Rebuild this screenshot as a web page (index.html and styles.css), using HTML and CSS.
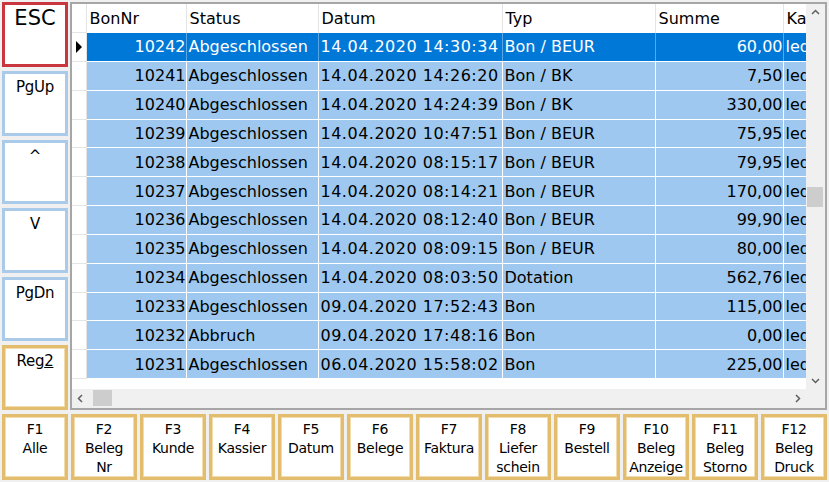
FILE: index.html
```html
<!DOCTYPE html>
<html lang="de">
<head>
    <meta charset="UTF-8">
    <title>Belege</title>
    <link rel="stylesheet" href="styles.css">
</head>
<body>
    <div class="screen">
        <div class="top">
            <!-- Navigation keys -->
            <div class="side">
                <div class="key key-red key-esc">ESC</div>
                <div class="key key-blue">PgUp</div>
                <div class="key key-blue">^</div>
                <div class="key key-blue">V</div>
                <div class="key key-blue">PgDn</div>
                <div class="key key-gold">Reg<u>2</u></div>
            </div>

            <!-- Receipt list -->
            <div class="grid">
                <div class="viewport">
                    <table class="list">
                        <colgroup>
                            <col class="c-ind">
                            <col class="c-nr">
                            <col class="c-status">
                            <col class="c-datum">
                            <col class="c-typ">
                            <col class="c-summe">
                            <col class="c-ka">
                        </colgroup>
                        <thead>
                            <tr>
                                <th class="ind"></th>
                                <th>BonNr</th>
                                <th>Status</th>
                                <th>Datum</th>
                                <th>Typ</th>
                                <th>Summe</th>
                                <th>Kassier</th>
                            </tr>
                        </thead>
                        <tbody>
                            <tr class="selected">
                                <td class="ind"><span class="arrow"></span></td>
                                <td class="num">10242</td><td>Abgeschlossen</td><td class="date">14.04.2020 14:30:34</td><td>Bon / BEUR</td><td class="num">60,00</td><td>ledig</td>
                            </tr>
                            <tr>
                                <td class="ind"></td>
                                <td class="num">10241</td><td>Abgeschlossen</td><td class="date">14.04.2020 14:26:20</td><td>Bon / BK</td><td class="num">7,50</td><td>ledig</td>
                            </tr>
                            <tr>
                                <td class="ind"></td>
                                <td class="num">10240</td><td>Abgeschlossen</td><td class="date">14.04.2020 14:24:39</td><td>Bon / BK</td><td class="num">330,00</td><td>ledig</td>
                            </tr>
                            <tr>
                                <td class="ind"></td>
                                <td class="num">10239</td><td>Abgeschlossen</td><td class="date">14.04.2020 10:47:51</td><td>Bon / BEUR</td><td class="num">75,95</td><td>ledig</td>
                            </tr>
                            <tr>
                                <td class="ind"></td>
                                <td class="num">10238</td><td>Abgeschlossen</td><td class="date">14.04.2020 08:15:17</td><td>Bon / BEUR</td><td class="num">79,95</td><td>ledig</td>
                            </tr>
                            <tr>
                                <td class="ind"></td>
                                <td class="num">10237</td><td>Abgeschlossen</td><td class="date">14.04.2020 08:14:21</td><td>Bon / BEUR</td><td class="num">170,00</td><td>ledig</td>
                            </tr>
                            <tr>
                                <td class="ind"></td>
                                <td class="num">10236</td><td>Abgeschlossen</td><td class="date">14.04.2020 08:12:40</td><td>Bon / BEUR</td><td class="num">99,90</td><td>ledig</td>
                            </tr>
                            <tr>
                                <td class="ind"></td>
                                <td class="num">10235</td><td>Abgeschlossen</td><td class="date">14.04.2020 08:09:15</td><td>Bon / BEUR</td><td class="num">80,00</td><td>ledig</td>
                            </tr>
                            <tr>
                                <td class="ind"></td>
                                <td class="num">10234</td><td>Abgeschlossen</td><td class="date">14.04.2020 08:03:50</td><td>Dotation</td><td class="num">562,76</td><td>ledig</td>
                            </tr>
                            <tr>
                                <td class="ind"></td>
                                <td class="num">10233</td><td>Abgeschlossen</td><td class="date">09.04.2020 17:52:43</td><td>Bon</td><td class="num">115,00</td><td>ledig</td>
                            </tr>
                            <tr>
                                <td class="ind"></td>
                                <td class="num">10232</td><td>Abbruch</td><td class="date">09.04.2020 17:48:16</td><td>Bon</td><td class="num">0,00</td><td>ledig</td>
                            </tr>
                            <tr>
                                <td class="ind"></td>
                                <td class="num">10231</td><td>Abgeschlossen</td><td class="date">06.04.2020 15:58:02</td><td>Bon</td><td class="num">225,00</td><td>ledig</td>
                            </tr>
                        </tbody>
                    </table>
                </div>

                <!-- Vertical scrollbar -->
                <div class="vscroll">
                    <svg class="chev" width="19" height="17" viewBox="0 0 19 17"><polyline points="6,10 9.5,6.5 13,10" fill="none" stroke="#606060" stroke-width="1.5"/></svg>
                    <div class="vtrack"><div class="vthumb"></div></div>
                    <svg class="chev" width="19" height="17" viewBox="0 0 19 17"><polyline points="6,7 9.5,10.5 13,7" fill="none" stroke="#606060" stroke-width="1.5"/></svg>
                </div>

                <!-- Horizontal scrollbar -->
                <div class="hscroll">
                    <svg class="chev" width="17" height="19" viewBox="0 0 17 19"><polyline points="10,6 6.5,9.5 10,13" fill="none" stroke="#606060" stroke-width="1.5"/></svg>
                    <div class="htrack"><div class="hthumb"></div></div>
                    <svg class="chev" width="17" height="19" viewBox="0 0 17 19"><polyline points="7,6 10.5,9.5 7,13" fill="none" stroke="#606060" stroke-width="1.5"/></svg>
                </div>
                <div class="corner"></div>
            </div>
        </div>

        <!-- Function keys -->
        <div class="fkeys">
            <div class="key key-gold">F1<br>Alle</div>
            <div class="key key-gold">F2<br>Beleg<br>Nr</div>
            <div class="key key-gold">F3<br>Kunde</div>
            <div class="key key-gold">F4<br>Kassier</div>
            <div class="key key-gold">F5<br>Datum</div>
            <div class="key key-gold">F6<br>Belege</div>
            <div class="key key-gold">F7<br>Faktura</div>
            <div class="key key-gold">F8<br>Liefer<br>schein</div>
            <div class="key key-gold">F9<br>Bestell</div>
            <div class="key key-gold">F10<br>Beleg<br>Anzeige</div>
            <div class="key key-gold">F11<br>Beleg<br>Storno</div>
            <div class="key key-gold">F12<br>Beleg<br>Druck</div>
        </div>
    </div>
</body>
</html>
```

FILE: styles.css
```css
body {
    margin: 0;
    background-color: #f0f0f0;
    font-family: "DejaVu Sans", Verdana, sans-serif;
    color: #000;
}

.screen {
    width: 829px;
    height: 482px;
    box-sizing: border-box;
    padding: 2px;
    display: flex;
    flex-direction: column;
    gap: 4px;
}

.top {
    height: 408px;
    display: flex;
    gap: 2px;
}

/* Keys */

.key {
    box-sizing: border-box;
    background-color: #fff;
    border: 3px solid #a9cbe9;
    text-align: center;
    font-size: 15px;
    letter-spacing: -0.3px;
    line-height: 19px;
    padding-top: 4px;
    overflow: hidden;
}

.key-blue {
    border-color: #a9cbe9;
}

.key-red {
    border-color: #c9363e;
}

.key-gold {
    border-color: #e3bd6e;
    box-shadow: inset 0 0 0 1px #f2dcae;
}

.key-esc {
    font-size: 21px;
    letter-spacing: 0;
    line-height: 24px;
    padding-top: 1px;
}

.side {
    width: 66px;
    display: flex;
    flex-direction: column;
    gap: 4px;
}

.side .key {
    flex: 1;
}

.side .key-esc {
    flex: 1.06;
}

.fkeys {
    height: 66px;
    display: flex;
    gap: 3px;
}

.fkeys .key {
    flex: 1;
    font-size: 14px;
    letter-spacing: -0.3px;
    line-height: 19px;
    padding-top: 3px;
}

/* Grid */

.grid {
    flex: 1;
    border: 2px solid #a6a6a6;
    background-color: #fff;
    display: grid;
    grid-template-columns: 1fr 19px;
    grid-template-rows: 1fr 19px;
    overflow: hidden;
}

.viewport {
    overflow: hidden;
    background-color: #fff;
}

.list {
    table-layout: fixed;
    border-collapse: collapse;
    width: 771px;
    font-size: 16px;
}

.c-ind { width: 14px; }
.c-nr { width: 100px; }
.c-status { width: 132px; }
.c-datum { width: 184px; }
.c-typ { width: 153px; }
.c-summe { width: 128px; }
.c-ka { width: 60px; }

.list th {
    height: 28px;
    padding: 0 3px;
    font-weight: normal;
    text-align: left;
    white-space: nowrap;
    overflow: hidden;
    border-right: 1px solid #e4e4e4;
    background-color: #fff;
}

.list td {
    height: 27.85px;
    padding: 0 2px;
    white-space: nowrap;
    overflow: hidden;
    background-color: #9ec8ef;
    border-right: 1px solid #fff;
    border-bottom: 1px solid #fff;
}

.list td.num {
    text-align: right;
    padding: 0;
}

.list td.date {
    letter-spacing: 0.5px;
}

.list .ind {
    background-color: #fff;
    border-right: 1px solid #e4e4e4;
    border-bottom: 1px solid #e4e4e4;
    padding: 0;
}

.list tr.selected td {
    background-color: #0078d7;
    color: #fff;
    border-right-color: #5aa7e6;
}

.list tr.selected td.ind {
    background-color: #fff;
    border-right-color: #e4e4e4;
}

.arrow {
    display: block;
    width: 0;
    height: 0;
    margin-left: 4px;
    border-top: 6px solid transparent;
    border-bottom: 6px solid transparent;
    border-left: 6px solid #000;
}

/* Scrollbars */

.vscroll {
    background-color: #f0f0f0;
    display: flex;
    flex-direction: column;
}

.vtrack {
    flex: 1;
    position: relative;
}

.vthumb {
    position: absolute;
    left: 1px;
    right: 2px;
    top: 166px;
    height: 20px;
    background-color: #cdcdcd;
}

.hscroll {
    background-color: #f0f0f0;
    display: flex;
}

.htrack {
    flex: 1;
    position: relative;
}

.hthumb {
    position: absolute;
    top: 1px;
    bottom: 2px;
    left: 4px;
    width: 19px;
    background-color: #cdcdcd;
}

.chev {
    display: block;
    flex: none;
}

.corner {
    background-color: #f0f0f0;
}
```
